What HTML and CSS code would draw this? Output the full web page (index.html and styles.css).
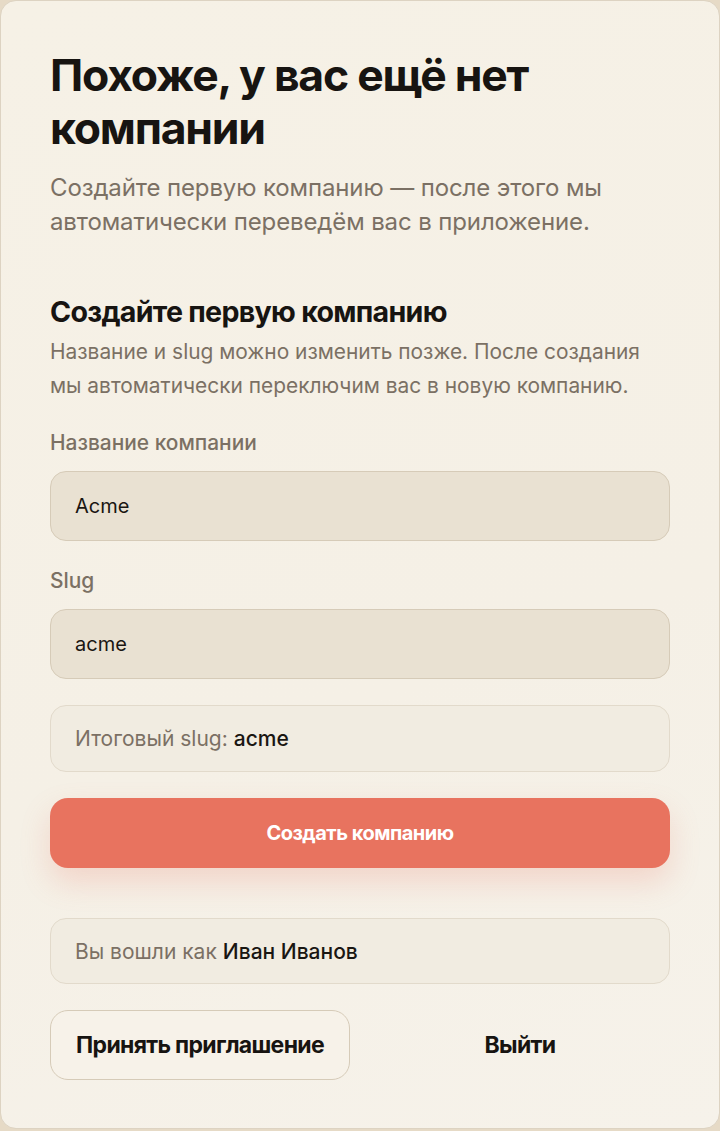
FILE: index.html
```html
<!DOCTYPE html>
<html lang="ru">
<head>
<meta charset="utf-8">
<title>Создайте компанию</title>
<link rel="stylesheet" href="styles.css">
</head>
<body>
<main class="card">
  <header class="intro">
    <h1 class="title">Похоже, у вас ещё нет компании</h1>
    <p class="lead">Создайте первую компанию — после этого мы автоматически переведём вас в приложение.</p>
  </header>
  <section class="form-section">
    <h2 class="section-title">Создайте первую компанию</h2>
    <p class="section-desc">Название и slug можно изменить позже. После создания мы автоматически переключим вас в новую компанию.</p>
    <form class="form">
      <label class="field">
        <span class="field-label">Название компании</span>
        <input class="input" type="text" value="Acme">
      </label>
      <label class="field">
        <span class="field-label">Slug</span>
        <input class="input" type="text" value="acme">
      </label>
      <div class="note">Итоговый slug: <strong class="note-value">acme</strong></div>
      <button type="button" class="btn-primary">Создать компанию</button>
    </form>
  </section>
  <div class="note note-user">Вы вошли как <strong class="note-value">Иван Иванов</strong></div>
  <div class="actions">
    <button type="button" class="btn-outline">Принять приглашение</button>
    <button type="button" class="btn-ghost">Выйти</button>
  </div>
</main>
</body>
</html>
```
FILE: styles.css
```css
* { box-sizing: border-box; }
html, body { margin: 0; padding: 0; }
body {
  background: #e6dac6;
  font-family: Inter, "Noto Sans", "Liberation Sans", sans-serif;
  color: #1b1713;
  min-height: 1131px;
}
.card {
  width: 720px;
  height: 1129px;
  background: linear-gradient(160deg, #f6f1e6 0%, #f5f0e6 60%, #f6f2ea 100%);
  border: 1px solid #ddd3c2;
  border-radius: 16px;
  padding: 48px 49px 48px 49px;
  display: flex;
  flex-direction: column;
}
.title {
  margin: 0;
  font-size: 44.5px;
  line-height: 53px;
  font-weight: 700;
  letter-spacing: -0.028em;
  color: #171411;
  max-width: 560px;
}
.lead {
  margin: 16px 0 0;
  font-size: 24px;
  line-height: 34px;
  letter-spacing: -0.005em;
  color: #7b7064;
}
.form-section { margin-top: 56px; }
.section-title {
  margin: 0;
  font-size: 28.6px;
  line-height: 34px;
  font-weight: 700;
  letter-spacing: -0.025em;
  color: #171411;
}
.section-desc {
  margin: 6px 0 0;
  font-size: 20.9px;
  line-height: 34px;
  color: #7b7064;
}
.form {
  margin-top: 28px;
  display: flex;
  flex-direction: column;
  gap: 26px;
}
.field { display: flex; flex-direction: column; gap: 16px; }
.field + .field { margin-top: 2px; }
.field-label {
  font-size: 20.9px;
  line-height: 24px;
  font-weight: 500;
  color: #7b7064;
}
.input {
  height: 70px;
  border: 1px solid #d6cbb8;
  background: #e9e1d2;
  border-radius: 16px;
  padding: 0 24px;
  font-family: inherit;
  font-size: 20px;
  color: #1a1612;
  outline: none;
}
.note {
  height: 67px;
  display: flex;
  align-items: center;
  gap: 6px;
  padding: 0 24px;
  border: 1px solid #e2dacb;
  background: #f1ece1;
  border-radius: 16px;
  font-size: 21px;
  color: #7b7064;
}
.note-value { font-weight: 500; color: #1a1612; }
.btn-primary {
  height: 70px;
  border: none;
  border-radius: 18px;
  background: #e8735f;
  color: #fff;
  font-family: inherit;
  font-size: 20px;
  font-weight: 700;
  letter-spacing: -0.025em;
  box-shadow: 0 14px 30px rgba(232, 115, 95, 0.22);
}
.note-user { margin-top: 50px; }
.actions {
  margin-top: 26px;
  display: grid;
  grid-template-columns: 1fr 1fr;
  gap: 20px;
}
.btn-outline, .btn-ghost {
  height: 70px;
  border-radius: 18px;
  font-family: inherit;
  font-size: 23px;
  font-weight: 700;
  letter-spacing: -0.03em;
  color: #171411;
}
.btn-outline {
  border: 1px solid #d6cbb8;
  background: #f7f2e9;
}
.btn-ghost {
  border: 1px solid transparent;
  background: transparent;
}
```
